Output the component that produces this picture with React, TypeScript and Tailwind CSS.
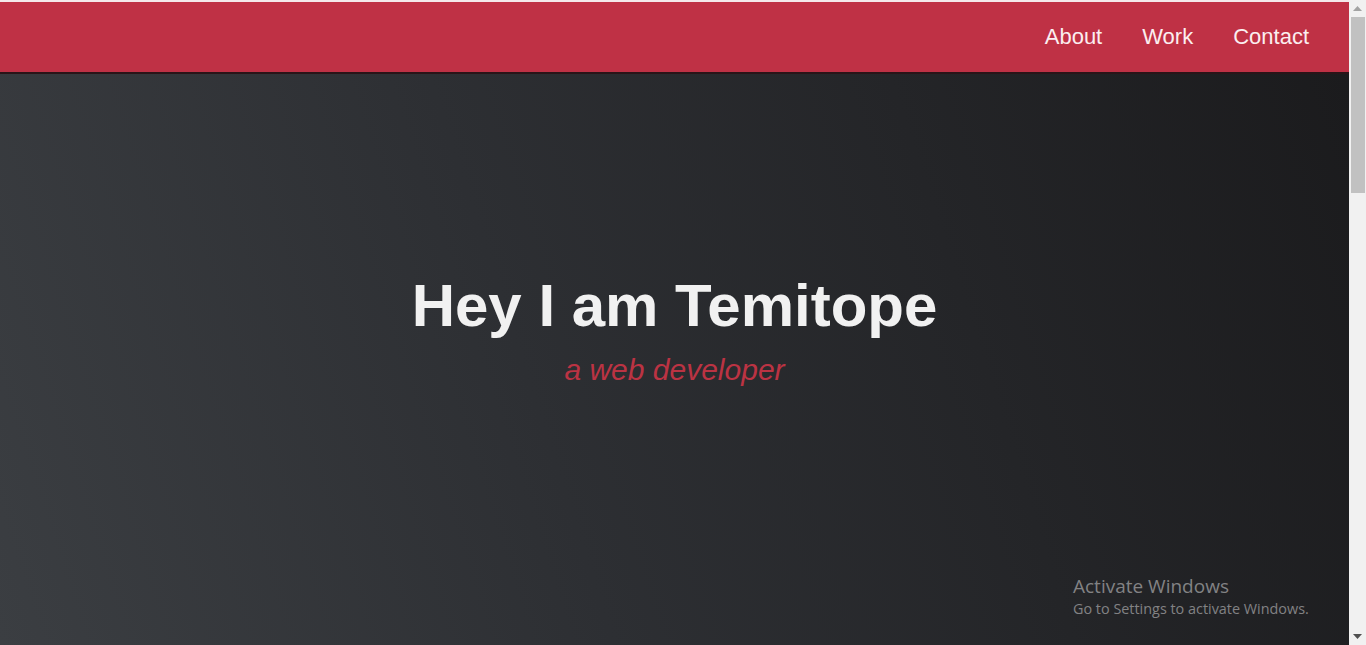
const links = ['About', 'Work', 'Contact'];

function Scrollbar() {
  return (
    <div className="w-[17px] shrink-0 bg-[#f1f1f1] flex flex-col items-center">
      <div className="h-[17px] w-full flex items-center justify-center">
        <svg width="9" height="5" viewBox="0 0 9 5">
          <path d="M0 5 L4.5 0 L9 5 Z" fill="#a3a3a3" />
        </svg>
      </div>
      <div className="w-[14px] h-[176px] bg-[#c1c1c1]" />
      <div className="flex-1" />
      <div className="h-[17px] w-full flex items-center justify-center">
        <svg width="9" height="5" viewBox="0 0 9 5">
          <path d="M0 0 L9 0 L4.5 5 Z" fill="#505050" />
        </svg>
      </div>
    </div>
  );
}

export default function App() {
  return (
    <div className="flex h-[645px] overflow-hidden bg-[#f1f1f1] font-['Liberation_Sans',Arial,sans-serif]">
      <div className="relative flex-1 flex flex-col">
        <div className="h-[2px] bg-[#f4e8ea]" />
        <header className="h-[70px] shrink-0 bg-[#bf3145] flex items-center justify-end gap-10 pr-10 border-b-2 border-[#2a1418] box-content">
          {links.map((l) => (
            <a key={l} href="#" className="text-[22px] text-[#fbeef0] leading-none">
              {l}
            </a>
          ))}
        </header>
        <main className="flex-1 flex flex-col items-center pt-[202px] bg-[linear-gradient(72deg,#3b3e42_0%,#2d2f33_40%,#242528_70%,#1b1b1d_100%)]">
          <h1 className="text-[60px] leading-[60px] font-bold text-[#f1f1f1]">Hey I am Temitope</h1>
          <p className="mt-[16px] text-[30px] leading-[36px] italic text-[#bb3343]">a web developer</p>
        </main>
        <div className="absolute left-[1073px] top-[574px] font-['Open_Sans','Noto_Sans',sans-serif] text-[#828284]">
          <div className="text-[19px] leading-[25px]">Activate Windows</div>
          <div className="text-[14.4px] leading-[20px]">Go to Settings to activate Windows.</div>
        </div>
      </div>
      <Scrollbar />
    </div>
  );
}
